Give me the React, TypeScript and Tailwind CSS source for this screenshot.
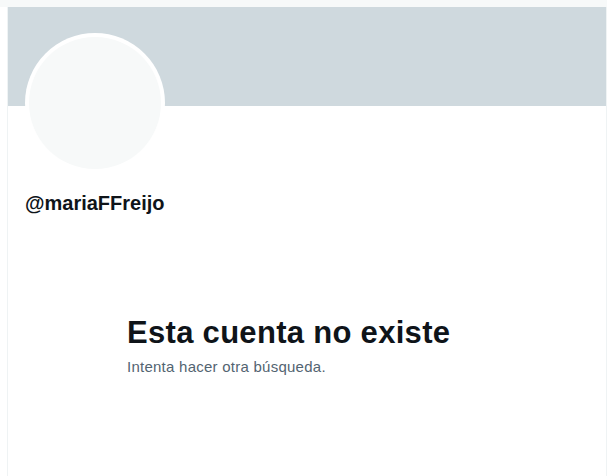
export default function App() {
  return (
    <div className="w-[616px] h-[476px] bg-white overflow-hidden" style={{ fontFamily: '"Liberation Sans", Arial, sans-serif' }}>
      <div className="w-[607px] h-[7px] bg-[#f7f9f9]" />
      <div className="ml-[7px] w-[600px] h-[469px] border-l border-r border-[#eff3f4] flex flex-col">
        <div className="h-[99px] bg-[#cfd9de] shrink-0" />
        <div className="pl-[17px] mt-[-73px]">
          <div className="w-[140px] h-[140px] rounded-full bg-white p-[4px]">
            <div className="w-full h-full rounded-full bg-[#f7f9f9]" />
          </div>
        </div>
        <div className="pl-[17px] mt-[18px] text-[20px] leading-[24px] font-bold text-[#0f1419]">@mariaFFreijo</div>
        <div className="pl-[119px] mt-[100px]">
          <div className="text-[31px] leading-[36px] font-bold text-[#0f1419] tracking-[0.3px]">Esta cuenta no existe</div>
          <div className="mt-[6px] text-[15px] leading-[20px] text-[#536471] tracking-[0.25px]">Intenta hacer otra búsqueda.</div>
        </div>
      </div>
    </div>
  );
}
